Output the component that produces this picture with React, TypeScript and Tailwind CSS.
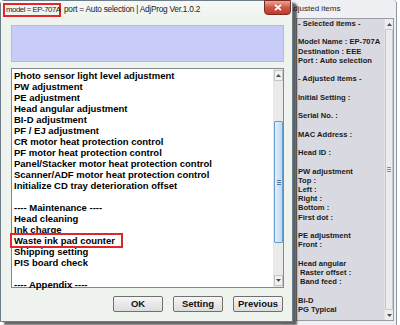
import React from "react";

const listItems = [
  "Photo sensor light level adjustment",
  "PW adjustment",
  "PE adjustment",
  "Head angular adjustment",
  "BI-D adjustment",
  "PF / EJ adjustment",
  "CR motor heat protection control",
  "PF motor heat protection control",
  "Panel/Stacker motor heat protection control",
  "Scanner/ADF motor heat protection control",
  "Initialize CD tray deterioration offset",
  "",
  "---- Maintenance ----",
  "Head cleaning",
  "Ink charge",
  "Waste ink pad counter",
  "Shipping setting",
  "PIS board check",
  "",
  "---- Appendix ----",
];

const rightLines = [
  "- Selected items -",
  "",
  "Model Name : EP-707A",
  "Destination : EEE",
  "Port : Auto selection",
  "",
  "- Adjusted items -",
  "",
  "Initial Setting :",
  "",
  "Serial No. :",
  "",
  "MAC Address :",
  "",
  "Head ID :",
  "",
  "PW adjustment",
  "Top :",
  "Left :",
  "Right :",
  "Bottom :",
  "First dot :",
  "",
  "PE adjustment",
  "Front :",
  "",
  "Head angular",
  " Raster offset :",
  " Band feed :",
  "",
  "Bi-D",
  "PG Typical",
];

const ArrowUp = () => (
  <svg width="5" height="3" viewBox="0 0 5 3">
    <path d="M0 3 L2.5 0 L5 3 Z" fill="#4d4d4d" />
  </svg>
);
const ArrowDown = () => (
  <svg width="5" height="3" viewBox="0 0 5 3">
    <path d="M0 0 L2.5 3 L5 0 Z" fill="#4d4d4d" />
  </svg>
);

function Button({ label }: { label: string }) {
  return (
    <div className="w-[50px] h-[16px] flex items-center justify-center border border-[#707070] rounded-[2px] bg-gradient-to-b from-[#f6f6f6] to-[#dcdcdc] text-[9.5px] font-bold text-[#111]">
      {label}
    </div>
  );
}

export default function App() {
  return (
    <div
      className="relative w-[400px] h-[325px] overflow-hidden bg-white"
      style={{ fontFamily: '"Liberation Sans", Arial, sans-serif' }}
    >
      {/* Right window: Adjusted items */}
      <div className="absolute left-[282px] top-0 w-[115px] h-[325px] bg-[#eef0f3] border-r border-[#8d97a3] rounded-tr-[4px] flex flex-col">
        <div className="h-[18px] flex items-center pl-[6px] text-[8px] text-[#1e1e1e]">
          Adjusted items
        </div>
        <div className="ml-[14px] mr-[2px] h-[303px] border border-[#9a9aa2] bg-[#d9dae1] flex">
          <div className="flex-1 pl-[1px] text-[7.6px] font-bold text-[#1a1a1a] leading-[9.23px] whitespace-pre">
            {rightLines.map((l, i) => (
              <div key={i} className="h-[9.23px]">
                {l}
              </div>
            ))}
          </div>
          <div className="w-[9px] flex flex-col bg-[#ededf0] border-l border-[#e2e2e6]">
            <div className="h-[10px] flex items-center justify-center">
              <ArrowUp />
            </div>
            <div className="flex-1 border border-[#c8c8cc] bg-[#ececef] rounded-[1px] flex items-center justify-center">
              <div className="flex flex-col gap-[1px]">
                <div className="w-[4px] h-[1px] bg-[#8b8b8b]" />
                <div className="w-[4px] h-[1px] bg-[#8b8b8b]" />
                <div className="w-[4px] h-[1px] bg-[#8b8b8b]" />
              </div>
            </div>
            <div className="h-[10px] flex items-center justify-center">
              <ArrowDown />
            </div>
          </div>
        </div>
      </div>

      {/* Main window */}
      <div className="absolute left-0 top-0 w-[293px] h-[322px] border border-[#6e7d8a] rounded-t-[4px] bg-[#eef4ed] shadow-[4px_3px_2px_rgba(0,0,0,0.6)] flex flex-col">
        {/* title bar */}
        <div className="relative h-[17px] flex items-center pl-[2px] text-[8.3px] text-[#1b1b1b] bg-gradient-to-b from-[#f7f9f7] to-[#eef3ee]">
          <div className="border-2 border-[#e0262a] h-[14px] w-[58px] pl-[1px] flex items-center text-[7.8px] tracking-[-0.45px] whitespace-nowrap">
            model = EP-707A
          </div>
          <span className="ml-[3px] tracking-[-0.25px] whitespace-nowrap">
            port = Auto selection | AdjProg Ver.1.0.2
          </span>
          <div className="absolute right-[1px] -top-[1px] w-[27px] h-[15px] rounded-b-[4px] border border-[#7a2a22] bg-gradient-to-b from-[#e7a597] via-[#cf5645] to-[#c23a27] flex items-center justify-center">
            <svg width="8" height="7" viewBox="0 0 8 7">
              <path d="M1 0.8 L7 6.2 M7 0.8 L1 6.2" stroke="#ffffff" strokeWidth="1.8" />
            </svg>
          </div>
        </div>

        {/* client */}
        <div className="flex-1 flex flex-col pl-[10px] pr-[8px] pt-[7px]">
          <div className="h-[37px] bg-[#c8ccf9] border border-[#b4b8e4]" />
          <div className="mt-[6px] h-[220px] border border-[#828790] bg-white flex">
            <div className="flex-1 pl-[2px] pt-[1px] text-[9.5px] font-bold text-black leading-[11px] whitespace-pre">
              {listItems.map((t, i) =>
                t === "Waste ink pad counter" ? (
                  <div key={i} className="h-[11px] relative">
                    <span className="absolute -left-[4px] -top-[2px] w-[113px] h-[15px] border-2 border-[#e0262a]" />
                    {t}
                  </div>
                ) : (
                  <div key={i} className="h-[11px]">
                    {t}
                  </div>
                )
              )}
            </div>
            <div className="w-[10px] flex flex-col bg-[#eaeaea] border-l border-[#e6e6e6]">
              <div className="h-[11px] mt-[1px] flex items-center justify-center border border-[#c4c4c4] bg-[#f2f2f2]">
                <ArrowUp />
              </div>
              <div className="h-[40px]" />
              <div className="h-[122px] border border-[#6e9cc8] rounded-[1px] bg-gradient-to-r from-[#e3f0fb] to-[#bcd9f3] flex items-center justify-center">
                <div className="flex flex-col gap-[1px]">
                  <div className="w-[4px] h-[1px] bg-[#4f7aa3]" />
                  <div className="w-[4px] h-[1px] bg-[#4f7aa3]" />
                  <div className="w-[4px] h-[1px] bg-[#4f7aa3]" />
                </div>
              </div>
              <div className="flex-1" />
              <div className="h-[11px] mb-[1px] flex items-center justify-center border border-[#c4c4c4] bg-[#f2f2f2]">
                <ArrowDown />
              </div>
            </div>
          </div>
          <div className="mt-[8px] flex pl-[102px] gap-[10px]">
            <Button label="OK" />
            <Button label="Setting" />
            <Button label="Previous" />
          </div>
        </div>
      </div>
    </div>
  );
}
